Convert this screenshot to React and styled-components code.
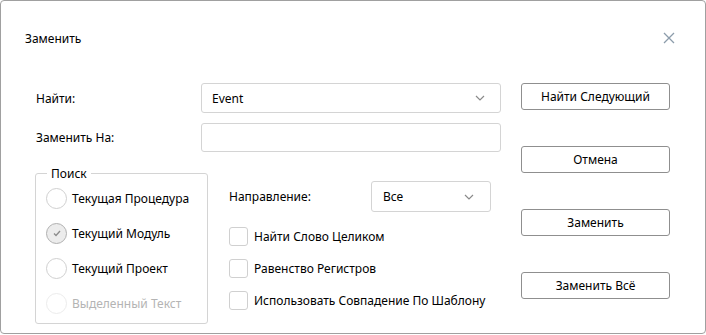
import React from "react";
import styled, { createGlobalStyle } from "styled-components";

const GlobalStyle = createGlobalStyle`
  body {
    margin: 0;
    background: #ffffff;
    font-family: "Noto Sans", "Open Sans", sans-serif;
    font-size: 12px;
    color: #1a1a1a;
  }
`;

const Chevron = () => (
  <svg width="10" height="6" viewBox="0 0 10 6">
    <path d="M1 1l4 4 4-4" fill="none" stroke="#8a8a8a" strokeWidth="1.2" />
  </svg>
);

const App = () => {
  const [scope, setScope] = React.useState(1);
  const [flags, setFlags] = React.useState([false, false, false]);

  const scopes = [
    { label: "Текущая Процедура" },
    { label: "Текущий Модуль" },
    { label: "Текущий Проект" },
    { label: "Выделенный Текст", disabled: true },
  ];
  const options = [
    "Найти Слово Целиком",
    "Равенство Регистров",
    "Использовать Совпадение По Шаблону",
  ];
  const buttons = ["Найти Следующий", "Отмена", "Заменить", "Заменить Всё"];

  return (
    <React.Fragment>
      <GlobalStyle />
      <Dialog>
        <Header>
          <Title>Заменить</Title>
          <Close>
            <svg width="12" height="12" viewBox="0 0 12 12">
              <path
                d="M1 1l10 10M11 1L1 11"
                stroke="#8c9cab"
                strokeWidth="1.3"
                fill="none"
              />
            </svg>
          </Close>
        </Header>
        <Body>
          <Main>
            <FieldRow>
              <Label>Найти:</Label>
              <Combo>
                <span>Event</span>
                <Chevron />
              </Combo>
            </FieldRow>
            <FieldRow>
              <Label>Заменить На:</Label>
              <TextBox />
            </FieldRow>
            <Lower>
              <Group>
                <Legend>Поиск</Legend>
                <RadioList>
                  {scopes.map((s, i) => (
                    <RadioRow
                      key={i}
                      $disabled={s.disabled}
                      onClick={() => !s.disabled && setScope(i)}
                    >
                      <Radio $checked={scope === i} $disabled={s.disabled}>
                        {scope === i && (
                          <svg width="8" height="7" viewBox="0 0 8 7">
                            <path
                              d="M1 3.5l2 2 4-4.5"
                              fill="none"
                              stroke="#8a8a8a"
                              strokeWidth="1.3"
                            />
                          </svg>
                        )}
                      </Radio>
                      {s.label}
                    </RadioRow>
                  ))}
                </RadioList>
              </Group>
              <Options>
                <DirectionRow>
                  <span>Направление:</span>
                  <SmallCombo>
                    <span>Все</span>
                    <Chevron />
                  </SmallCombo>
                </DirectionRow>
                {options.map((o, i) => (
                  <CheckRow
                    key={i}
                    onClick={() =>
                      setFlags(flags.map((f, j) => (j === i ? !f : f)))
                    }
                  >
                    <Check $checked={flags[i]} />
                    {o}
                  </CheckRow>
                ))}
              </Options>
            </Lower>
          </Main>
          <Buttons>
            {buttons.map((b) => (
              <Button key={b}>{b}</Button>
            ))}
          </Buttons>
        </Body>
      </Dialog>
    </React.Fragment>
  );
};

const Dialog = styled.div`
  box-sizing: border-box;
  width: 706px;
  height: 334px;
  border: 1px solid #a0a0a0;
  border-radius: 4px;
  background: #ffffff;
  display: flex;
  flex-direction: column;
  white-space: nowrap;
`;

const Header = styled.div`
  display: flex;
  align-items: center;
  justify-content: space-between;
  padding: 28px 30px 0 24px;
  height: 20px;
`;

const Title = styled.div`
  color: #000000;
  margin-top: -1px;
`;

const Close = styled.div`
  display: flex;
  margin-top: -3px;
  cursor: pointer;
`;

const Body = styled.div`
  display: flex;
  padding: 34px 0 0 34px;
  gap: 20px;
`;

const Main = styled.div`
  width: 466px;
  display: flex;
  flex-direction: column;
`;

const FieldRow = styled.div`
  display: grid;
  grid-template-columns: 166px 300px;
  align-items: center;
  margin-bottom: 10px;
  color: #000000;
`;

const Label = styled.div`
  padding-left: 1px;
`;

const Combo = styled.div`
  box-sizing: border-box;
  height: 30px;
  border: 1px solid #d4d4d4;
  border-radius: 3px;
  display: flex;
  align-items: center;
  justify-content: space-between;
  padding: 0 15px 0 10px;
  color: #000000;
`;

const TextBox = styled.div`
  box-sizing: border-box;
  height: 29px;
  border: 1px solid #d4d4d4;
  border-radius: 3px;
`;

const Lower = styled.div`
  display: flex;
  gap: 21px;
  margin-top: 3px;
`;

const Group = styled.fieldset`
  box-sizing: border-box;
  width: 173px;
  height: 159px;
  margin: 0;
  padding: 0 0 0 10px;
  border: 1px solid #d4d4d4;
  border-radius: 3px;
`;

const Legend = styled.legend`
  padding: 0 4px;
  margin-left: 1px;
  color: #000000;
`;

const RadioList = styled.div`
  display: flex;
  flex-direction: column;
  margin-top: -1px;
`;

const RadioRow = styled.div`
  display: flex;
  align-items: center;
  gap: 5px;
  height: 35px;
  color: ${(p) => (p.$disabled ? "#b4b4b4" : "#000000")};
  cursor: ${(p) => (p.$disabled ? "default" : "pointer")};
`;

const Radio = styled.div`
  box-sizing: border-box;
  width: 21px;
  height: 21px;
  border-radius: 50%;
  border: 1px solid
    ${(p) => (p.$disabled ? "#ececec" : p.$checked ? "#b0b0b0" : "#d0d0d0")};
  background: ${(p) => (p.$checked ? "#ececec" : "#ffffff")};
  display: flex;
  align-items: center;
  justify-content: center;
`;

const Options = styled.div`
  display: flex;
  flex-direction: column;
  padding-top: 16px;
`;

const DirectionRow = styled.div`
  display: grid;
  grid-template-columns: 142px 120px;
  align-items: center;
  height: 31px;
  margin-bottom: 8px;
  color: #000000;
`;

const SmallCombo = styled(Combo)`
  height: 31px;
  padding: 0 16px 0 11px;
`;

const CheckRow = styled.div`
  display: flex;
  align-items: center;
  gap: 6px;
  height: 32px;
  color: #000000;
  cursor: pointer;
`;

const Check = styled.div`
  box-sizing: border-box;
  width: 19px;
  height: 19px;
  border: 1px solid #d0d0d0;
  border-radius: 3px;
  background: ${(p) => (p.$checked ? "#ececec" : "#ffffff")};
`;

const Buttons = styled.div`
  display: flex;
  flex-direction: column;
  gap: 36px;
`;

const Button = styled.div`
  box-sizing: border-box;
  width: 149px;
  height: 27px;
  border: 1px solid #8f8f8f;
  border-radius: 3px;
  display: flex;
  align-items: center;
  justify-content: center;
  color: #000000;
  cursor: pointer;
`;

export default App;
